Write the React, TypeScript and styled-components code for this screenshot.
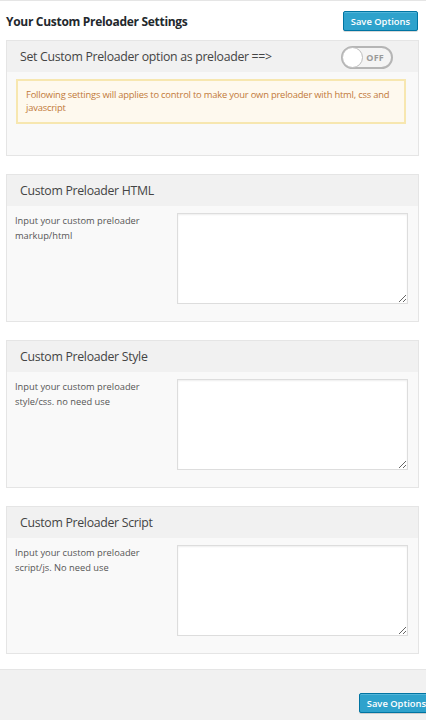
import React, {useState} from 'react';
import styled, {createGlobalStyle} from 'styled-components';

const GlobalStyle = createGlobalStyle`
  html, body {
    margin: 0;
    padding: 0;
    background: #fff;
    overflow-x: hidden;
  }
  body {
    font-family: "Open Sans", "Liberation Sans", sans-serif;
    color: #444;
  }
`

const sections = [
    {title: 'Custom Preloader HTML', label: 'Input your custom preloader markup/html'},
    {title: 'Custom Preloader Style', label: 'Input your custom preloader style/css. no need use'},
    {title: 'Custom Preloader Script', label: 'Input your custom preloader script/js. No need use'},
]

const App = () => {
    const [enabled, setEnabled] = useState<boolean>(false)
    return (
        <Page>
            <GlobalStyle/>
            <Content>
                <TopBar>
                    <PageTitle>Your Custom Preloader Settings</PageTitle>
                    <SaveButton>Save Options</SaveButton>
                </TopBar>

                <Panel $first>
                    <PanelHeader>
                        <PanelTitle>Set Custom Preloader option as preloader ==&gt;</PanelTitle>
                        <Toggle $on={enabled} onClick={() => setEnabled(!enabled)}>
                            <Knob $on={enabled}/>
                            <ToggleText>{enabled ? 'ON' : 'OFF'}</ToggleText>
                        </Toggle>
                    </PanelHeader>
                    <NoticeBody>
                        <Notice>
                            Following settings will applies to control to make your own preloader with html, css and
                            javascript
                        </Notice>
                    </NoticeBody>
                </Panel>

                {sections.map(s => (
                    <Panel key={s.title}>
                        <PanelHeader>
                            <PanelTitle>{s.title}</PanelTitle>
                        </PanelHeader>
                        <FieldRow>
                            <FieldLabel>{s.label}</FieldLabel>
                            <TextArea/>
                        </FieldRow>
                    </Panel>
                ))}
            </Content>
            <Footer>
                <SaveButton $edge>Save Options</SaveButton>
            </Footer>
        </Page>
    );
};

export default App;


const Page = styled.div`
  width: 426px;
  min-height: 720px;
  border-top: 1px solid #e5e5e5;
  box-sizing: border-box;
  display: flex;
  flex-direction: column;
  overflow: hidden;
`

const Content = styled.div`
  padding: 0 7px 15px 6px;
`

const TopBar = styled.div`
  display: flex;
  align-items: center;
  justify-content: space-between;
  height: 38px;
  padding-top: 1px;
`

const PageTitle = styled.h2`
  margin: 0;
  font-size: 12px;
  letter-spacing: -0.3px;
  font-weight: 700;
  color: #23282d;
`

const SaveButton = styled.button<{ $edge?: boolean }>`
  height: 20px;
  padding: 0 7px;
  margin-right: ${p => p.$edge ? '-8px' : '1px'};
  font-family: "Open Sans", "Liberation Sans", sans-serif;
  font-size: 9.4px;
  font-weight: 600;
  color: #fff;
  background: #2ea2cc;
  border: 1px solid #0074a2;
  border-radius: 2px;
  box-shadow: inset 0 1px 0 rgba(120, 200, 230, .5), 0 1px 0 rgba(0, 0, 0, .15);
  cursor: pointer;
  white-space: nowrap;
`

const Panel = styled.div<{ $first?: boolean }>`
  margin-top: ${p => p.$first ? '0' : '18px'};
  border: 1px solid #e5e5e5;
  background: #f9f9f9;
`

const PanelHeader = styled.div`
  display: flex;
  align-items: center;
  justify-content: space-between;
  height: 31px;
  padding: 0 25px 0 13px;
  background: #f1f1f1;
`

const PanelTitle = styled.h3`
  margin: 0;
  font-size: 12.3px;
  letter-spacing: -0.3px;
  font-weight: 400;
  color: #444;
`

const Toggle = styled.div<{ $on: boolean }>`
  position: relative;
  width: 41px;
  height: 19px;
  border: 2px solid #b5b5b5;
  border-radius: 12px;
  background: ${p => p.$on ? '#2ea2cc' : '#f4f4f4'};
  cursor: pointer;
  display: flex;
  align-items: center;
  justify-content: flex-end;
  padding-right: 7px;
  box-sizing: content-box;
  margin-top: 1px;
`

const Knob = styled.span<{ $on: boolean }>`
  position: absolute;
  top: -1px;
  left: ${p => p.$on ? '26px' : '-1px'};
  width: 21px;
  height: 21px;
  border-radius: 50%;
  background: #fff;
  border: 1px solid #bdbdbd;
  box-sizing: border-box;
`

const ToggleText = styled.span`
  font-size: 9px;
  font-weight: 700;
  color: #9a9a9a;
  letter-spacing: 0.2px;
`

const NoticeBody = styled.div`
  padding: 7px 12px 31px 9px;
`

const Notice = styled.div`
  border: 2px solid #f7e7b0;
  background: #fef9ee;
  color: #c27a3a;
  font-size: 9.4px;
  letter-spacing: -0.2px;
  line-height: 12.5px;
  padding: 8px 3px 8px 8px;
`

const FieldRow = styled.div`
  display: grid;
  grid-template-columns: 162px 1fr;
  padding: 7px 10px 17px 8px;
`

const FieldLabel = styled.div`
  font-size: 9.3px;
  line-height: 15px;
  color: #555;
  padding-top: 0px;
  padding-right: 18px;
`

const TextArea = styled.textarea`
  height: 91px;
  box-sizing: border-box;
  border: 1px solid #ddd;
  background: #fff;
  box-shadow: inset 0 1px 2px rgba(0, 0, 0, .07);
  resize: vertical;
  font-family: "Open Sans", "Liberation Sans", sans-serif;
  margin: 0;
`

const Footer = styled.div`
  flex: 1;
  display: flex;
  justify-content: flex-end;
  align-items: flex-start;
  padding-top: 23px;
  background: #f1f1f1;
  border-top: 1px solid #e5e5e5;
`
